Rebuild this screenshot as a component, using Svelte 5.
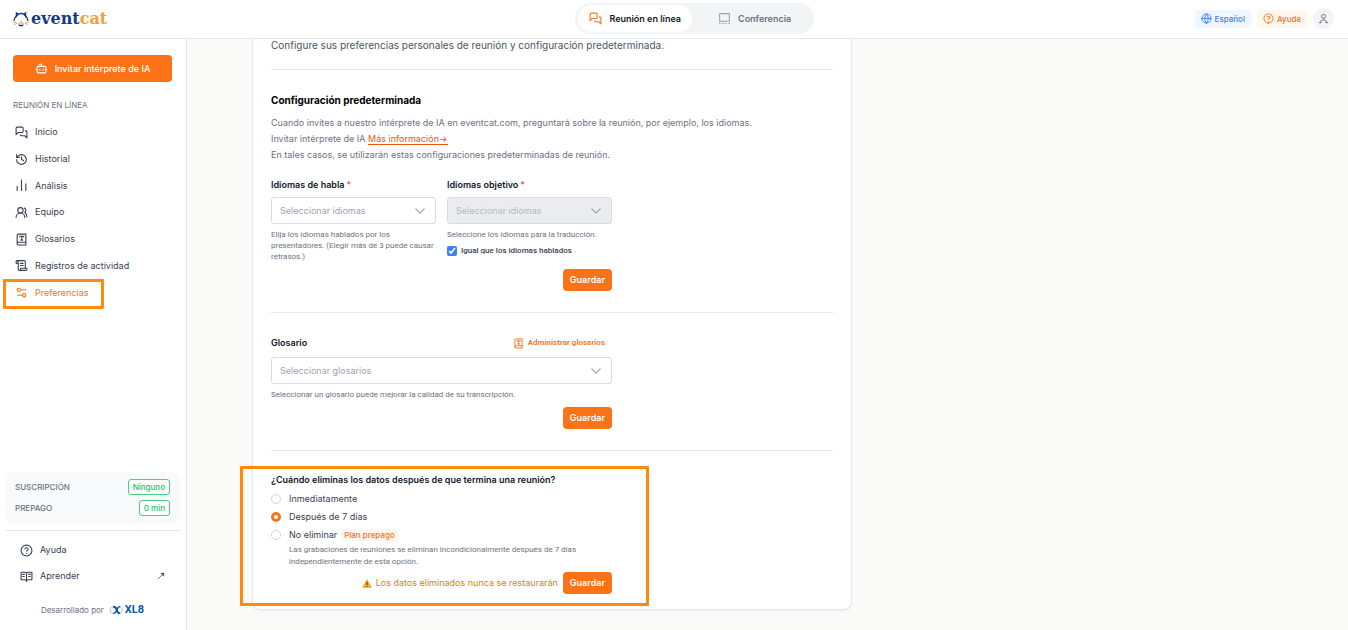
<script>
  const nav = [
    { label: 'Inicio', icon: 'chat' },
    { label: 'Historial', icon: 'history' },
    { label: 'Análisis', icon: 'bars' },
    { label: 'Equipo', icon: 'users' },
    { label: 'Glosarios', icon: 'glossary' },
    { label: 'Registros de actividad', icon: 'scroll' },
    { label: 'Preferencias', icon: 'sliders', active: true }
  ];

  const icons = {
    chat: ['M15 10a2 2 0 0 1-2 2H6l-4 4V4a2 2 0 0 1 2-2h9a2 2 0 0 1 2 2z', 'M19 9h1a2 2 0 0 1 2 2v11l-4-4h-6a2 2 0 0 1-2-2'],
    history: ['M3 12a9 9 0 1 0 9-9 9.75 9.75 0 0 0-6.74 2.74L3 8', 'M3 3v5h5', 'M12 7v5l4 2'],
    bars: ['M4 21v-7', 'M12 21V2', 'M20 21V9'],
    users: ['M18 21a8 8 0 0 0-16 0', 'M10 13a5 5 0 1 0 0-10 5 5 0 0 0 0 10z', 'M22 20c0-3.370-2-6.500-4-8a5 5 0 0 0-.45-8.300'],
    glossary: ['M4 19.500V4.500A2.500 2.500 0 0 1 6.500 2H20v20H6.500a2.500 2.500 0 0 1 0-5H20', 'M9 7.500V6h7v1.500', 'M12.500 6v7', 'M10.500 13h4'],
    scroll: ['M15 12h-5', 'M15 8h-5', 'M19 17V5a2 2 0 0 0-2-2H4', 'M8 21h12a2 2 0 0 0 2-2v-1a1 1 0 0 0-1-1H11a1 1 0 0 0-1 1v1a2 2 0 1 1-4 0V5a2 2 0 1 0-4 0v2a1 1 0 0 0 1 1h3'],
    sliders: ['M20 7h-9', 'M14 17H5', 'M17 20a3 3 0 1 0 0-6 3 3 0 0 0 0 6z', 'M7 10a3 3 0 1 0 0-6 3 3 0 0 0 0 6z'],
    bot: ['M12 8V4H8', 'M6 8h12a2 2 0 0 1 2 2v8a2 2 0 0 1-2 2H6a2 2 0 0 1-2-2v-8a2 2 0 0 1 2-2z', 'M2 14h2', 'M20 14h2', 'M15 13v2', 'M9 13v2'],
    screen: ['M3 3h18v14H3z', 'M3 21h1', 'M9 21h1', 'M14 21h1', 'M20 21h1'],
    globe: ['M12 22a10 10 0 1 0 0-20 10 10 0 0 0 0 20z', 'M12 2a14.500 14.500 0 0 0 0 20 14.500 14.500 0 0 0 0-20', 'M2 12h20'],
    compass: ['M12 22a10 10 0 1 0 0-20 10 10 0 0 0 0 20z', 'M9 8h6v4h-3v1', 'M12 17h.01'],
    person: ['M12 12a4.500 4.500 0 1 0 0-9 4.500 4.500 0 0 0 0 9z', 'M5 21v-1a7 5 0 0 1 14 0v1', 'M3 21h4', 'M17 21h4'],
    help: ['M12 22a10 10 0 1 0 0-20 10 10 0 0 0 0 20z', 'M9.090 9a3 3 0 0 1 5.830 1c0 2-3 3-3 3', 'M12 17h.01'],
    book: ['M12 7v14', 'M12 6c-1-2-3-2-4-2H2v14h7c2 0 3 1 3 3 0-2 1-3 3-3h7V4h-6c-1 0-3 0-4 2z', 'M5 8h3', 'M5 12h3', 'M16 8h3', 'M16 12h3'],
    chevron: ['M2 7l10 10 10-10'],
    arrow: ['M3 21L20 4', 'M13 4h7v7z']
  };

  let same = $state(true);
  let retention = $state('week');
</script>

{#snippet icon(name, cls = '')}
  <svg class="icon {cls}" viewBox="0 0 24 24" aria-hidden="true">
    {#each icons[name] as d}<path {d} />{/each}
  </svg>
{/snippet}

<header>
  <a class="brand" href="#inicio">
    <svg class="cat" viewBox="0 0 48 46" aria-hidden="true">
      <path d="M10 13Q4 21 3 29M38 13q6 8 7 16M16 8q8-3 16 0" fill="none" stroke="#123a86" stroke-width="4" />
      <path d="M8 1l11 7-10 11zM40 1L29 8l10 11z" fill="#123a86" />
      <path d="M15 39q9 3 18 0l-4 6H19z" fill="#123a86" />
      <path d="M1 33h9M4 40l8-4M47 33h-9M44 40l-8-4M15 34q5 5 9 0 4 5 9 0M24 28v6" fill="none" stroke="#f0a135" stroke-width="3" />
    </svg>
    <span class="wordmark">event<span>cat</span></span>
  </a>
  <div class="modes">
    <button class="mode on">{@render icon('chat')}Reunión en línea</button>
    <button class="mode off">{@render icon('screen')}Conferencia</button>
  </div>
  <div class="tools">
    <button class="pill blue">{@render icon('globe')}Español</button>
    <button class="pill orange">{@render icon('compass')}Ayuda</button>
    <button class="avatar" aria-label="Cuenta">{@render icon('person')}</button>
  </div>
</header>

<div class="shell">
  <aside>
    <button class="invite">{@render icon('bot')}Invitar intérprete de IA</button>
    <h2 class="group">REUNIÓN EN LÍNEA</h2>
    <nav>
      {#each nav as item}
        <a href="#{item.icon}" class:active={item.active}>{@render icon(item.icon)}{item.label}</a>
      {/each}
    </nav>
    <div class="foot">
      <dl class="usage">
        <div><dt>SUSCRIPCIÓN</dt><dd>Ninguno</dd></div>
        <div><dt>PREPAGO</dt><dd>0 min</dd></div>
      </dl>
      <div class="links">
        <a href="#ayuda">{@render icon('help')}Ayuda</a>
        <a href="#aprender">{@render icon('book')}Aprender{@render icon('arrow', 'out')}</a>
      </div>
      <p class="powered">
        Desarrollado por
        <span class="xl8">
          <svg viewBox="0 0 44 30" aria-hidden="true">
            <path d="M16 24A9 10 0 1 1 16 6M30 5a9 10 0 1 1 0 20" fill="none" stroke="#bcd6ef" stroke-width="4" />
            <path d="M12 5q9 0 11 10t9 10" fill="none" stroke="#0b5c9c" stroke-width="6" />
            <path d="M12 25q8 0 11-10T33 4" fill="none" stroke="#0b5c9c" stroke-width="4" />
          </svg>XL8
        </span>
      </p>
    </div>
  </aside>

  <main>
    <div class="card">
      <p class="intro">Configure sus preferencias personales de reunión y configuración predeterminada.</p>

      <section class="defaults">
        <h1>Configuración predeterminada</h1>
        <p class="lead">
          Cuando invites a nuestro intérprete de IA en eventcat.com, preguntará sobre la reunión, por ejemplo, los idiomas.<br />
          Invitar intérprete de IA <a href="#mas">Más información→</a><br />
          En tales casos, se utilizarán estas configuraciones predeterminadas de reunión.
        </p>
        <div class="form">
          <div class="cols">
            <div>
              <label class="title" for="speak">Idiomas de habla<b>*</b></label>
              <div class="pick">
                <select id="speak"><option>Seleccionar idiomas</option></select>
                {@render icon('chevron')}
              </div>
              <p class="hint">Elija los idiomas hablados por los presentadores. (Elegir más de 3 puede causar retrasos.)</p>
            </div>
            <div>
              <label class="title" for="target">Idiomas objetivo<b>*</b></label>
              <div class="pick">
                <select id="target" disabled={same}><option>Seleccionar idiomas</option></select>
                {@render icon('chevron')}
              </div>
              <p class="hint">Seleccione los idiomas para la traducción.</p>
              <label class="check"><input type="checkbox" bind:checked={same} />Igual que los idiomas hablados</label>
            </div>
          </div>
          <div class="actions"><button class="save">Guardar</button></div>
        </div>
      </section>

      <section class="glossary">
        <div class="form">
          <div class="row">
            <label class="title" for="gloss">Glosario</label>
            <a class="manage" href="#glosarios">{@render icon('glossary')}Administrar glosarios</a>
          </div>
          <div class="pick">
            <select id="gloss"><option>Seleccionar glosarios</option></select>
            {@render icon('chevron')}
          </div>
          <p class="hint">Seleccionar un glosario puede mejorar la calidad de su transcripción.</p>
          <div class="actions"><button class="save">Guardar</button></div>
        </div>
      </section>

      <section class="retention">
        <fieldset class="form">
          <legend class="title">¿Cuándo eliminas los datos después de que termina una reunión?</legend>
          <label class="radio"><input type="radio" name="keep" value="now" bind:group={retention} />Inmediatamente</label>
          <label class="radio"><input type="radio" name="keep" value="week" bind:group={retention} />Después de 7 días</label>
          <label class="radio"><input type="radio" name="keep" value="never" bind:group={retention} />No eliminar <span class="tag">Plan prepago</span></label>
          <p class="note">Las grabaciones de reuniones se eliminan incondicionalmente después de 7 días independientemente de esta opción.</p>
          <div class="actions">
            <span class="warn">
              <svg viewBox="0 0 20 18" aria-hidden="true">
                <path d="M10 1l9 16H1z" fill="#f5a524" stroke="#e8a33b" stroke-linejoin="round" />
                <path d="M10 6v6M10 14v2" stroke="#4b3a2a" stroke-width="2" />
              </svg>Los datos eliminados nunca se restaurarán
            </span>
            <button class="save">Guardar</button>
          </div>
        </fieldset>
      </section>
    </div>
  </main>
</div>

<style>
  :global(body) {
    margin: 0;
    background: #fafaf9;
    color: #374151;
    font: 9px/16px Inter, sans-serif;
  }
  :global(*, *::before, *::after) { box-sizing: border-box; }
  h1, h2, p, dl, dd, fieldset { margin: 0; }
  button, select, input { font: inherit; }
  button { border: 0; cursor: pointer; }
  a { color: inherit; text-decoration: none; }

  .icon {
    width: 13px;
    height: 13px;
    flex: none;
    fill: none;
    stroke: currentColor;
    stroke-width: 2;
    stroke-linecap: round;
    stroke-linejoin: round;
  }

  header {
    display: flex;
    align-items: center;
    height: 39px;
    padding: 0 14px 1px 13px;
    background: #fff;
    border-bottom: 1px solid #e5e7eb;
  }
  .brand { display: flex; align-items: center; gap: 2px; width: 182px; }
  .cat { width: 16px; height: 16px; }
  .wordmark {
    color: #123a86;
    font: bold 16px/20px "DejaVu Serif", serif;
  }
  .wordmark span { color: #f0a135; }

  .modes {
    display: flex;
    margin: 0 auto;
    padding: 2px 3px;
    border-radius: 16px;
    background: #f3f4f6;
  }
  .mode {
    display: flex;
    align-items: center;
    gap: 7px;
    height: 27px;
    padding: 0 11px;
    border-radius: 14px;
    background: none;
    color: #6b7280;
    font-weight: 600;
  }
  .mode.on { background: #fff; color: #111827; }
  .mode.on .icon { color: #f97316; }
  .mode.off { padding: 0 20px 0 26px; }
  .mode.off .icon { color: #9ca3af; }

  .tools { display: flex; align-items: center; gap: 6px; }
  .pill {
    display: flex;
    align-items: center;
    gap: 3px;
    height: 18px;
    padding: 0 6px;
    border-radius: 4px;
    font-size: 8px;
    font-weight: 500;
  }
  .pill .icon { width: 11px; height: 11px; }
  .blue { background: #eff6ff; color: #3b82f6; }
  .orange { background: #fff7ed; color: #f97316; }
  .avatar {
    display: grid;
    place-items: center;
    width: 21px;
    height: 21px;
    padding: 0;
    border-radius: 50%;
    background: #f3f4f6;
    color: #6b7280;
  }
  .avatar .icon { width: 11px; height: 11px; }

  .shell { display: flex; min-height: calc(100vh - 39px); }
  aside {
    display: flex;
    flex-direction: column;
    flex: none;
    width: 187px;
    padding: 16px 6px 12px 5px;
    background: #fff;
    border-right: 1px solid #e5e7eb;
  }
  .invite {
    display: flex;
    align-items: center;
    justify-content: center;
    gap: 7px;
    height: 27px;
    margin: 0 8px;
    border-radius: 4px;
    background: #fb7316;
    color: #fff;
    font-weight: 500;
  }
  .group {
    margin: 15px 8px 6px;
    color: #6b7280;
    font-size: 8px;
    font-weight: 400;
    line-height: 16px;
  }
  nav { display: grid; grid-auto-rows: 1fr; min-height: 187px; }
  nav a {
    position: relative;
    display: flex;
    align-items: center;
    gap: 7px;
    padding-left: 10px;
  }
  nav a.active { color: #f97316; }
  nav a.active::after {
    content: "";
    position: absolute;
    inset: 0 auto auto -2px;
    width: 101px;
    height: 30px;
    border: 3px solid #ff8a0c;
    border-radius: 1px;
  }

  .foot { margin-top: auto; }
  .usage {
    display: grid;
    gap: 5px;
    padding: 7px 10px 8px;
    border-radius: 8px;
    background: #f9fafb;
    font-size: 8px;
    font-weight: 500;
  }
  .usage div { display: flex; justify-content: space-between; align-items: center; }
  .usage dt { color: #6b7280; }
  .usage dd {
    padding: 0 4px;
    border: 1px solid #4ace82;
    border-radius: 3px;
    background: #fff;
    color: #22c55e;
    line-height: 14px;
  }
  .links {
    display: grid;
    margin-top: 6px;
    padding: 6px 15px 0;
    border-top: 1px solid #e5e7eb;
  }
  .links a { display: flex; align-items: center; gap: 7px; height: 26px; }
  .links :global(.icon.out) { width: 8px; height: 8px; margin-left: auto; fill: currentColor; }
  .powered {
    display: flex;
    align-items: center;
    justify-content: center;
    gap: 5px;
    margin-top: 13px;
    color: #6b7280;
    font-size: 8px;
  }
  .xl8 {
    display: flex;
    align-items: center;
    gap: 1px;
    color: #0b5c9c;
    font: bold 11px/16px Roboto, sans-serif;
  }
  .xl8 svg { width: 15px; height: 10px; }

  main { flex: 1; min-width: 0; padding: 0 20px 20px 65px; }
  .card {
    max-width: 600px;
    padding: 0 18px 15px;
    border: 1px solid #e5e7eb;
    border-top: 0;
    border-radius: 0 0 8px 8px;
    background: #fff;
    box-shadow: 0 1px 2px #0000000d;
  }
  .intro { padding-bottom: 18px; color: #4b5563; font-size: 10px; line-height: 12px; }
  section { position: relative; border-top: 1px solid #e5e7eb; }
  .form {
    max-width: 341px;
    min-width: 0;
    padding: 0;
    border: 0;
  }

  h1 { padding-top: 22px; color: #000; font-size: 10px; font-weight: 700; line-height: 16px; }
  .lead { margin: 7px 0 14px; color: #6b7280; }
  .lead a { border-bottom: 1px solid #ea580c; color: #ea580c; }
  .cols { display: grid; grid-template-columns: 1fr 1fr; gap: 11px; }
  .title { display: block; padding: 0; color: #111827; font-weight: 600; }
  .title b { margin-left: 2px; color: #ef4444; font-weight: 500; }
  .pick { display: grid; align-items: center; margin-top: 4px; }
  .pick select {
    grid-area: 1 / 1;
    width: 100%;
    height: 27px;
    padding: 0 8px;
    border: 1px solid #d9dce1;
    border-radius: 3px;
    appearance: none;
    background: #fff;
    color: #9ca3af;
  }
  .pick select:disabled { background: #ebecf0; color: #b4b9c2; opacity: 1; }
  .pick .icon {
    grid-area: 1 / 1;
    justify-self: end;
    width: 10px;
    height: 10px;
    margin-right: 11px;
    color: #9ca3af;
    stroke-width: 3;
    pointer-events: none;
  }
  .hint, .note, .check, .manage { font-family: Roboto, Inter, sans-serif; font-size: 8px; }
  .hint { margin-top: 5px; color: #6b7280; line-height: 11px; }
  .check { display: flex; align-items: center; gap: 4px; margin-top: 3px; font-weight: 500; }
  .check input {
    width: 10px;
    height: 10px;
    margin: 0;
    accent-color: #3b82f6;
  }
  .actions { display: flex; align-items: center; justify-content: flex-end; gap: 5px; margin-top: 7px; }
  .save {
    height: 22px;
    padding: 0 7px;
    border-radius: 4px;
    background: #fb7316;
    color: #fff;
    font-weight: 600;
  }
  .defaults, .glossary { padding-bottom: 21px; }
  .glossary { padding-top: 22px; }
  .glossary .pick { margin-top: 6px; }
  .row { display: flex; align-items: center; justify-content: space-between; }
  .manage {
    display: flex;
    align-items: center;
    gap: 4px;
    margin-right: 7px;
    color: #f97316;
    font-weight: 600;
  }
  .manage .icon { width: 11px; height: 11px; }

  .retention { padding-top: 21px; }
  .retention::after {
    content: "";
    position: absolute;
    inset: 15px auto auto -31px;
    width: 409px;
    height: 140px;
    border: 3px solid #ff8a0c;
    border-radius: 1px;
    pointer-events: none;
  }
  .retention .title { margin-bottom: 2px; }
  .radio { display: flex; align-items: center; gap: 8px; height: 18px; }
  .radio input {
    width: 10px;
    height: 10px;
    margin: 0;
    border: 1px solid #d1d5db;
    border-radius: 50%;
    appearance: none;
    background: #fff;
  }
  .radio input:checked { border: 3px solid #f97316; }
  .tag {
    margin-left: -4px;
    padding: 0 3px;
    border-radius: 3px;
    background: #fff7ed;
    color: #f97316;
    font-size: 8px;
    font-weight: 500;
    line-height: 12px;
  }
  .note { padding: 0 20px 0 18px; color: #6b7280; line-height: 12px; }
  .retention .actions { margin-top: 4px; }
  .warn { display: flex; align-items: center; gap: 4px; color: #ca8a04; }
  .warn svg { width: 10px; height: 9px; }
</style>
